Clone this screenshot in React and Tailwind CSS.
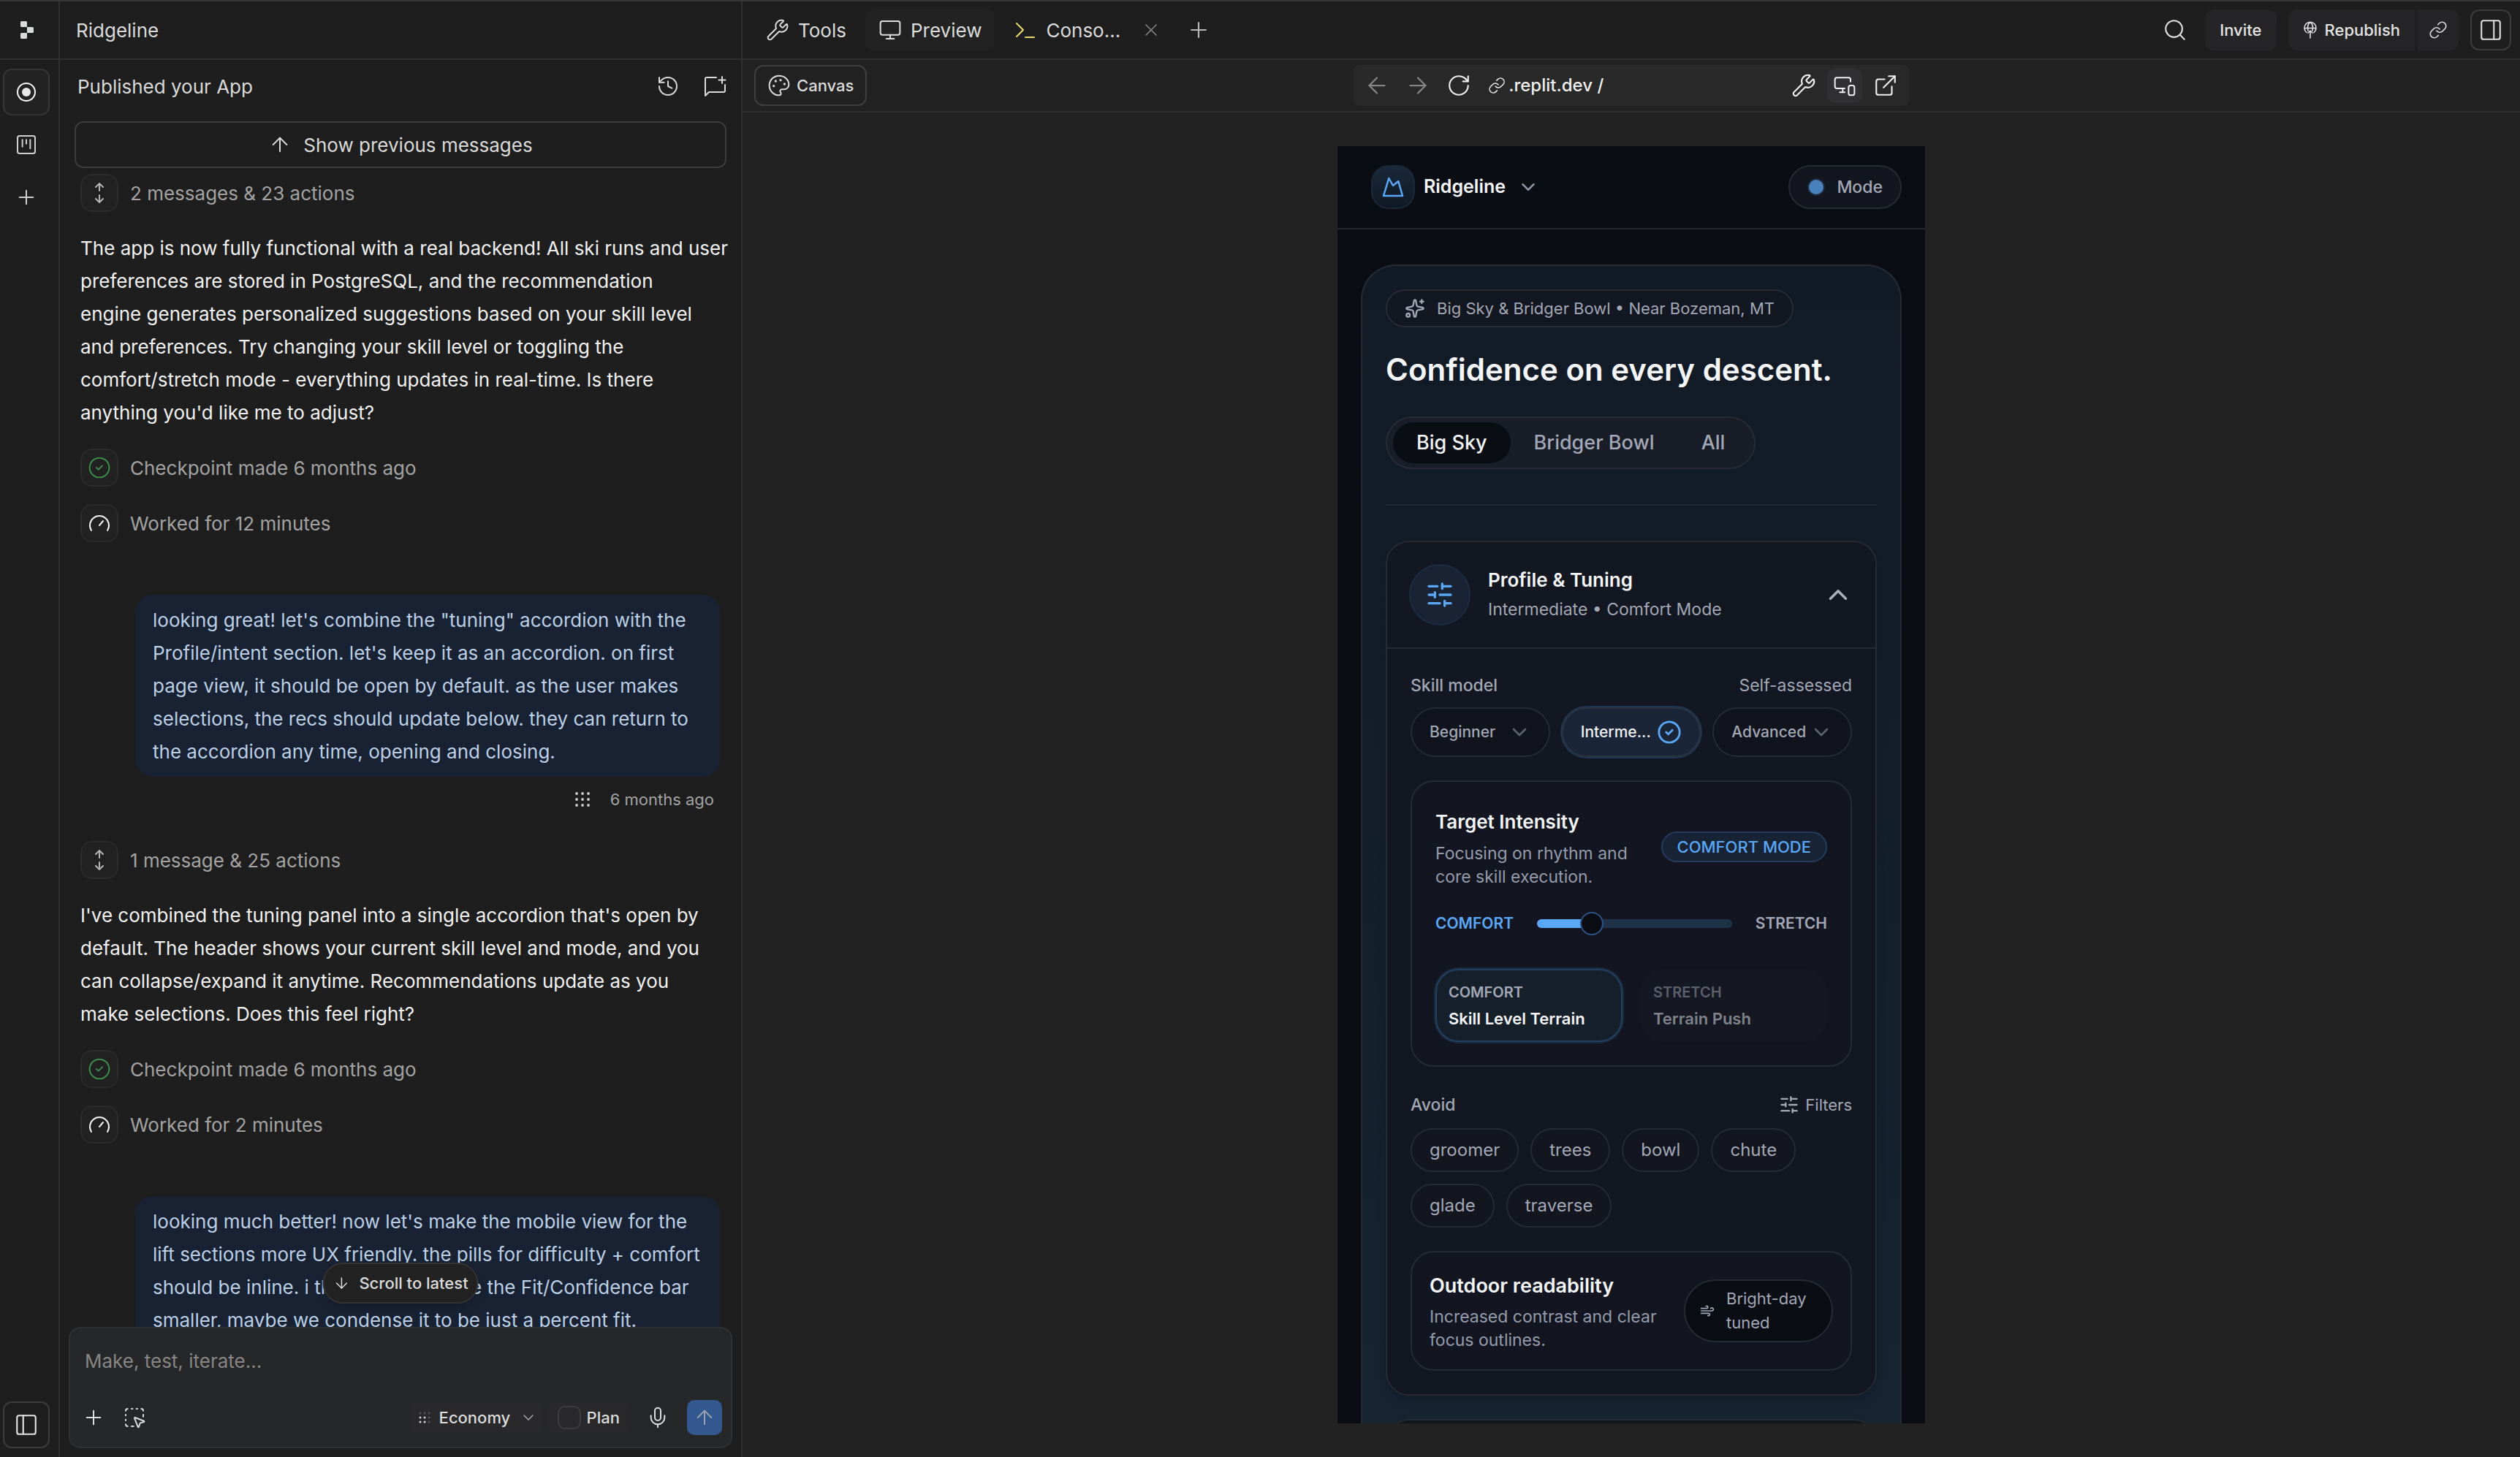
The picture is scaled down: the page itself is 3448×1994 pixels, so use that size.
import React, {useState} from "react";
import {
    ArrowDown,
    ArrowLeft,
    ArrowRight,
    ArrowUp,
    ChevronDown,
    ChevronUp,
    CircleCheck,
    ExternalLink,
    History,
    Link,
    Mic,
    Monitor,
    MonitorSmartphone,
    Palette,
    PanelLeft,
    PanelRight,
    Plus,
    RotateCw,
    Search,
    SlidersHorizontal,
    Sparkles,
    SquareDashedMousePointer,
    SquareKanban,
    Wind,
    Wrench,
    X,
} from "lucide-react";

const firstReply = `The app is now fully functional with a real backend! All ski runs and user
preferences are stored in PostgreSQL, and the recommendation
engine generates personalized suggestions based on your skill level
and preferences. Try changing your skill level or toggling the
comfort/stretch mode - everything updates in real-time. Is there
anything you'd like me to adjust?`;

const firstRequest = `looking great! let's combine the "tuning" accordion with the
Profile/intent section. let's keep it as an accordion. on first
page view, it should be open by default. as the user makes
selections, the recs should update below. they can return to
the accordion any time, opening and closing.`;

const secondReply = `I've combined the tuning panel into a single accordion that's open by
default. The header shows your current skill level and mode, and you
can collapse/expand it anytime. Recommendations update as you
make selections. Does this feel right?`;

const secondRequest = `looking much better! now let's make the mobile view for the
lift sections more UX friendly. the pills for difficulty + comfort
should be inline. i think we can make the Fit/Confidence bar
smaller, maybe we condense it to be just a percent fit.`;

const ReplitLogo = () => (
    <svg width="18" height="24" viewBox="0 0 18 24" fill="#d9dadb">
        <path d="M1.5 0h6A1.5 1.5 0 0 1 9 1.5V8H1.5A1.5 1.5 0 0 1 0 6.500V1.500A1.500 1.500 0 0 1 1.500 0z" />
        <path d="M9 8h7.500A1.500 1.500 0 0 1 18 9.500v5a1.500 1.500 0 0 1-1.500 1.500H9z" />
        <path d="M1.500 16H9v6.500A1.500 1.500 0 0 1 7.500 24h-6A1.500 1.500 0 0 1 0 22.500v-5A1.500 1.500 0 0 1 1.500 16z" />
    </svg>
);

const AgentIcon = () => (
    <svg width="28" height="28" viewBox="0 0 28 28" fill="none">
        <circle cx="14" cy="14" r="12" stroke="#f5f5f5" strokeWidth="2" />
        <circle cx="14" cy="14" r="6" fill="#e8e8e8" />
    </svg>
);

const NewChatIcon = () => (
    <svg width="32" height="32" viewBox="0 0 32 32" fill="none" stroke="currentColor" strokeWidth="2" strokeLinecap="round" strokeLinejoin="round">
        <path d="M18 4H5a2 2 0 0 0-2 2v23l5-5h20a2 2 0 0 0 2-2V14" />
        <path d="M26 3v9M21.500 7.500h9" />
    </svg>
);

const ExpandIcon = () => (
    <svg width="16" height="32" viewBox="0 0 16 32" fill="none" stroke="#b4b4b4" strokeWidth="2" strokeLinecap="round" strokeLinejoin="round">
        <path d="M8 13V3M3 8l5-5 5 5M8 19v10M3 24l5 5 5-5" />
    </svg>
);

const GaugeIcon = () => (
    <svg width="32" height="32" viewBox="0 0 32 32" fill="none" stroke="#f0f0f0" strokeWidth="2" strokeLinecap="round">
        <path d="M5 26a13 13 0 1 1 22 0M16 19l5-6" />
    </svg>
);

const GridDots = () => (
    <svg width="20" height="20" viewBox="0 0 20 20" fill="#c8c8c8">
        {[2, 10, 18].map((y) => [2, 10, 18].map((x) => <circle key={`${x}-${y}`} cx={x} cy={y} r="2" />))}
    </svg>
);

const EconomyDots = () => (
    <svg width="16" height="16" viewBox="0 0 16 16" fill="#d4d4d4">
        {[2, 8, 14].map((y) => [2, 8, 14].map((x) => (
            <circle key={`${x}-${y}`} cx={x} cy={y} r="1.500" opacity={y === 2 || x === 14 ? 0.250 : 1} />
        )))}
    </svg>
);

const ConsoleIcon = () => (
    <svg width="32" height="32" viewBox="0 0 32 32" fill="none" stroke="#e9d971" strokeWidth="2" strokeLinecap="round" strokeLinejoin="round">
        <path d="M4 7l9 9-9 9M16 26h12" />
    </svg>
);

const PublishIcon = () => (
    <svg width="20" height="24" viewBox="0 0 20 24" fill="none" stroke="currentColor" strokeWidth="1.600" strokeLinecap="round" strokeLinejoin="round">
        <path d="M5 15.500a8 8 0 1 1 10 0M2 9.500h16M7 13c-1.500-5 0-10 3-11.500 3 1.500 4.500 6.500 3 11.500M10 23V13M7 16l3-3 3 3" />
    </svg>
);

const RidgeIcon = () => (
    <svg width="32" height="32" viewBox="0 0 32 32" fill="none" stroke="#5aa8f5" strokeWidth="2.500" strokeLinejoin="round">
        <path d="M3 28L10.300 4l5.700 10 7.300-6L29 28z" />
    </svg>
);

const StatusRow = ({icon, children}) => (
    <div className="flex items-center gap-4">
        <span className="flex size-[52px] items-center justify-center rounded-2xl border-2 border-[#2b2b2b] bg-[#212121]">{icon}</span>
        <span className="text-[#a3a3a3]">{children}</span>
    </div>
);

const Bubble = ({children}) => (
    <p className="ml-auto w-[800px] whitespace-pre-line rounded-3xl bg-[#182233] px-6 py-3 leading-[45px] text-[#bccfe4]">{children}</p>
);

const Reply = ({children}) => (
    <p className="my-[27px] whitespace-pre leading-[45px] text-[#f2f2f2]">{children}</p>
);

const Rail = () => (
    <nav className="flex w-[82px] shrink-0 flex-col border-r-2 border-[#303030]">
        <div className="flex h-20 items-center border-b-2 border-[#303030] pl-7">
            <ReplitLogo />
        </div>
        <div className="flex flex-1 flex-col gap-2 py-3 pl-1">
            <button aria-label="Agent" className="flex size-16 items-center justify-center rounded-xl border-2 border-[#353535] bg-[#222222]">
                <AgentIcon />
            </button>
            <button aria-label="Board" className="flex size-16 items-center justify-center text-[#d0d0d0]">
                <SquareKanban size={32} strokeWidth={1.5} />
            </button>
            <button aria-label="New" className="flex size-16 items-center justify-center text-[#d0d0d0]">
                <Plus size={32} strokeWidth={1.5} />
            </button>
            <button aria-label="Toggle sidebar" className="mt-auto flex size-16 items-center justify-center rounded-xl border-2 border-[#3b3b3b] text-[#e4e4e4]">
                <PanelLeft size={34} strokeWidth={1.5} />
            </button>
        </div>
    </nav>
);

const Composer = () => (
    <form className="mx-3 mb-3 rounded-2xl border-2 border-[#303132] bg-[#262728]" onSubmit={(e) => e.preventDefault()}>
        <textarea
            aria-label="Message"
            rows={1}
            placeholder="Make, test, iterate..."
            className="block h-[98px] w-full resize-none bg-transparent px-5 pt-[22px] leading-[45px] text-[#e4e4e4] placeholder:text-[#868686] focus:outline-none"
        />
        <div className="flex items-center pb-4 pl-4 pr-3 text-[22px] font-medium text-[#dcdcdc]">
            <button type="button" aria-label="Attach"><Plus size={32} strokeWidth={1.5} /></button>
            <button type="button" aria-label="Select element" className="ml-6"><SquareDashedMousePointer size={32} strokeWidth={1.5} /></button>
            <div className="ml-auto flex h-12 items-center gap-3 rounded-xl bg-[#29292b] pl-3 pr-2">
                <EconomyDots />
                <select aria-label="Mode" className="appearance-none bg-transparent">
                    <option>Economy</option>
                </select>
                <ChevronDown size={24} strokeWidth={1.5} className="text-[#a8a8a8]" />
            </div>
            <label className="ml-2 flex h-12 items-center gap-2 rounded-xl bg-[#29292b] pl-3 pr-3">
                <input type="checkbox" className="size-8 appearance-none rounded-[10px] border-2 border-[#3d3d3f]" />
                Plan
            </label>
            <button type="button" aria-label="Dictate" className="mx-6"><Mic size={32} strokeWidth={1.5} /></button>
            <button aria-label="Send" className="flex size-12 items-center justify-center rounded-[10px] bg-[#32588f] text-[#9aa3ae]">
                <ArrowUp size={32} strokeWidth={1.5} />
            </button>
        </div>
    </form>
);

const ChatPanel = () => (
    <section className="flex w-[934px] shrink-0 flex-col border-r-2 border-[#303030] text-[26px]">
        <header className="flex h-20 shrink-0 items-center border-b-2 border-[#303030] pl-[22px] text-[#dadada]">
            <h1>Ridgeline</h1>
        </header>
        <div className="flex h-[72px] shrink-0 items-center gap-8 pl-6 pr-5 text-[#dadada]">
            <h2 className="mr-auto">Published your App</h2>
            <button aria-label="History"><History size={32} strokeWidth={1.5} /></button>
            <button aria-label="New chat"><NewChatIcon /></button>
        </div>
        <div className="relative flex min-h-0 flex-1 flex-col">
            <div className="min-h-0 flex-1 overflow-hidden px-5 pt-3">
                <button className="flex h-16 w-full items-center justify-center gap-4 rounded-xl border-2 border-[#3b3b3b] text-[#dadada]">
                    <ArrowUp size={32} strokeWidth={1.5} />
                    Show previous messages
                </button>
                <div className="pl-2 pr-[9px] pt-2">
                    <StatusRow icon={<ExpandIcon />}>2 messages &amp; 23 actions</StatusRow>
                    <Reply>{firstReply}</Reply>
                    <StatusRow icon={<CircleCheck size={32} strokeWidth={1.5} className="text-[#3f8a4d]" />}>Checkpoint made 6 months ago</StatusRow>
                    <div className="mb-[72px] mt-6">
                        <StatusRow icon={<GaugeIcon />}>Worked for 12 minutes</StatusRow>
                    </div>
                    <Bubble>{firstRequest}</Bubble>
                    <div className="mb-[26px] flex h-[62px] items-center justify-end gap-7 pr-2 text-[22px] text-[#a3a3a3]">
                        <button aria-label="Message options"><GridDots /></button>
                        6 months ago
                    </div>
                    <StatusRow icon={<ExpandIcon />}>1 message &amp; 25 actions</StatusRow>
                    <Reply>{secondReply}</Reply>
                    <StatusRow icon={<CircleCheck size={32} strokeWidth={1.5} className="text-[#3f8a4d]" />}>Checkpoint made 6 months ago</StatusRow>
                    <div className="mb-[72px] mt-6">
                        <StatusRow icon={<GaugeIcon />}>Worked for 2 minutes</StatusRow>
                    </div>
                    <Bubble>{secondRequest}</Bubble>
                </div>
            </div>
            <button className="absolute bottom-8 left-1/2 flex h-14 -translate-x-1/2 items-center gap-3 whitespace-nowrap rounded-full border-2 border-[#333333] bg-[#222222] px-3 text-[22px] font-medium text-[#dcdcdc] shadow-lg">
                <ArrowDown size={24} strokeWidth={1.5} />
                Scroll to latest
            </button>
        </div>
        <Composer />
    </section>
);

const TabBar = () => (
    <header className="flex h-20 shrink-0 items-center border-b-2 border-[#303030] pl-[14px] pr-3 text-[26px] text-[#dcdcdc]">
        <div className="flex items-center gap-2">
            <button className="flex h-14 items-center gap-3 px-[18px]"><Wrench size={32} strokeWidth={1.5} />Tools</button>
            <button className="flex h-14 items-center gap-3 rounded-xl bg-[#222222] px-[18px]"><Monitor size={32} strokeWidth={1.5} />Preview</button>
            <button className="flex h-14 items-center gap-3 pl-[18px]"><ConsoleIcon />Conso...</button>
        </div>
        <button aria-label="Close tab" className="ml-7 text-[#808080]"><X size={28} strokeWidth={1.5} /></button>
        <button aria-label="New tab" className="ml-[34px] text-[#b8b8b8]"><Plus size={34} strokeWidth={1.5} /></button>
        <div className="ml-auto flex items-center text-[22px] font-medium">
            <button aria-label="Search" className="mr-6"><Search size={34} strokeWidth={1.5} /></button>
            <button className="h-14 rounded-xl bg-[#252527] px-5 text-[#e4e4e4]">Invite</button>
            <button className="ml-4 flex h-14 items-center gap-[10px] rounded-l-xl bg-[#252527] px-5 text-[#e4e4e4]"><PublishIcon />Republish</button>
            <button aria-label="Copy link" className="ml-1 flex size-14 items-center justify-center rounded-r-xl bg-[#252527]"><Link size={26} strokeWidth={1.5} /></button>
            <button aria-label="Toggle panel" className="ml-4 flex size-14 items-center justify-center rounded-xl border-2 border-[#3b3b3b]"><PanelRight size={34} strokeWidth={1.5} /></button>
        </div>
    </header>
);

const AddressBar = () => (
    <div className="grid h-[72px] shrink-0 grid-cols-[1fr_760px_1fr] items-center border-b-2 border-[#303030] px-4">
        <button className="flex h-14 w-fit items-center gap-2 rounded-xl border-2 border-[#3f3f3f] pl-4 pr-4 text-[22px] font-medium text-[#dcdcdc]">
            <Palette size={32} strokeWidth={1.5} />
            Canvas
        </button>
        <div className="flex h-14 items-center gap-2 rounded-lg bg-[#292929] px-2 text-[#efefef]">
            <button aria-label="Back" className="flex size-12 items-center justify-center text-[#858585]"><ArrowLeft size={36} strokeWidth={1.5} /></button>
            <button aria-label="Forward" className="flex size-12 items-center justify-center text-[#858585]"><ArrowRight size={36} strokeWidth={1.5} /></button>
            <button aria-label="Reload" className="flex size-12 items-center justify-center"><RotateCw size={34} strokeWidth={1.5} /></button>
            <label className="flex flex-1 items-center gap-1 pl-2">
                <Link size={26} strokeWidth={1.5} />
                <input aria-label="Address" defaultValue=".replit.dev /" className="w-full bg-transparent text-[24px] font-medium focus:outline-none" />
            </label>
            <button aria-label="Developer tools" className="flex size-12 items-center justify-center"><Wrench size={34} strokeWidth={1.5} /></button>
            <button aria-label="Device size" className="flex size-12 items-center justify-center rounded-xl bg-[#303032]"><MonitorSmartphone size={32} strokeWidth={1.5} /></button>
            <button aria-label="Open in new tab" className="flex size-12 items-center justify-center"><ExternalLink size={34} strokeWidth={1.5} /></button>
        </div>
    </div>
);

const SkillPill = ({label, active}) => (
    active ? (
        <button className="flex h-[68px] min-w-0 items-center justify-between rounded-full border-2 border-[#2c333e] bg-[#1a2637] px-6 text-[21px] font-medium text-[#f1f4f8] ring-2 ring-[#20354f]">
            <span className="whitespace-nowrap">{label}</span>
            <CircleCheck size={34} strokeWidth={2} className="shrink-0 text-[#5aa8f5]" />
        </button>
    ) : (
        <button className="flex h-[68px] min-w-0 items-center justify-between rounded-full border-2 border-[#262a33] bg-[#11141d] px-6 text-[21px] font-medium text-[#a2a8b5]">
            <span>{label}</span>
            <ChevronDown size={32} strokeWidth={2} className="shrink-0 text-[#5b606b]" />
        </button>
    )
);

const TargetIntensity = () => {
    const [intensity, setIntensity] = useState(25);
    return (
        <div className="mt-8 rounded-[32px] border-2 border-[#262a33] bg-[#131620] p-8">
            <div className="flex items-center justify-between">
                <div>
                    <h3 className="text-[26px] font-semibold leading-[46px] text-[#f4f6f9]">Target Intensity</h3>
                    <p className="mt-1 text-[23px] leading-8 text-[#949cab]">Focusing on rhythm and<br />core skill execution.</p>
                </div>
                <span className="rounded-full border-2 border-[#243c5c] bg-[#182436] px-5 text-[22px] font-medium leading-[38px] text-[#5aa8f5]">COMFORT MODE</span>
            </div>
            <div className="mt-8 flex h-8 items-center gap-8 text-[21px] font-semibold">
                <label htmlFor="intensity" className="text-[#5aa8f5]">COMFORT</label>
                <input
                    id="intensity"
                    type="range"
                    value={intensity}
                    onChange={(e) => setIntensity(Number(e.target.value))}
                    className="h-3 min-w-0 flex-1 appearance-none rounded-full bg-[linear-gradient(to_right,#5aa8f5_28%,#20324a_28%)] [&::-webkit-slider-thumb]:size-8 [&::-webkit-slider-thumb]:appearance-none [&::-webkit-slider-thumb]:rounded-full [&::-webkit-slider-thumb]:border-2 [&::-webkit-slider-thumb]:border-[#2c5482] [&::-webkit-slider-thumb]:bg-[#0b0d15]"
                />
                <span className="text-[#a2a8b5]">STRETCH</span>
            </div>
            <div className="mt-[46px] grid grid-cols-2 gap-6">
                <button className="flex h-[100px] flex-col justify-center rounded-[32px] border-2 border-[#24405f] bg-[#16202b] px-4 text-left ring-2 ring-[#1a2a3f]">
                    <span className="text-[20px] font-semibold leading-9 text-[#a2a8b5]">COMFORT</span>
                    <span className="text-[22px] font-semibold leading-9 text-[#f4f6f9]">Skill Level Terrain</span>
                </button>
                <button className="flex h-[100px] flex-col justify-center rounded-[32px] bg-[#151822] px-[18px] text-left">
                    <span className="text-[20px] font-semibold leading-9 text-[#5a5f6a]">STRETCH</span>
                    <span className="text-[22px] font-semibold leading-9 text-[#7f828a]">Terrain Push</span>
                </button>
            </div>
        </div>
    );
};

const ProfileCard = () => (
    <div className="overflow-hidden rounded-[32px] border-2 border-[#262a33] bg-[#131721] shadow-lg">
        <button className="flex w-full items-center border-b-2 border-[#262a33] p-[30px] text-left">
            <span className="flex size-[84px] items-center justify-center rounded-full border-2 border-[#1c2c41] bg-[#192334] text-[#5aa8f5]">
                <SlidersHorizontal size={40} strokeWidth={2} />
            </span>
            <span className="ml-6 flex-1">
                <span className="block text-[26px] font-semibold leading-10 text-[#f4f6f9]">Profile &amp; Tuning</span>
                <span className="block text-[23px] leading-10 text-[#a2a8b5]">Intermediate • Comfort Mode</span>
            </span>
            <ChevronUp size={42} strokeWidth={2} className="text-[#a9b0bb]" />
        </button>
        <div className="p-8 pt-[30px]">
            <div className="flex justify-between text-[23px] leading-10 text-[#a2a8b5]">
                <span className="font-medium">Skill model</span>
                <span>Self-assessed</span>
            </div>
            <div className="mt-[10px] grid grid-cols-3 gap-4">
                <SkillPill label="Beginner" />
                <SkillPill label="Interme..." active />
                <SkillPill label="Advanced" />
            </div>
            <TargetIntensity />
            <div className="mt-8 flex items-center justify-between text-[23px] leading-10 text-[#a2a8b5]">
                <span className="font-medium">Avoid</span>
                <button className="flex items-center gap-2 text-[22px]"><SlidersHorizontal size={28} strokeWidth={2} />Filters</button>
            </div>
            <div className="mt-3 flex flex-wrap gap-4">
                {["groomer", "trees", "bowl", "chute", "glade", "traverse"].map((terrain) => (
                    <button key={terrain} className="h-[60px] rounded-full border-2 border-[#262a33] bg-[#13151f] px-6 text-[24px] text-[#a2a8b5]">{terrain}</button>
                ))}
            </div>
            <div className="mt-8 flex items-center justify-between rounded-[32px] border-2 border-[#262a33] bg-[#131620] p-6">
                <div>
                    <h3 className="text-[27px] font-semibold leading-[44px] text-[#f4f6f9]">Outdoor readability</h3>
                    <p className="mt-1 text-[23px] leading-8 text-[#949cab]">Increased contrast and clear<br />focus outlines.</p>
                </div>
                <span className="flex w-[204px] items-center gap-4 rounded-full border-2 border-[#262a33] bg-[#0b0d15] py-2 pl-5 text-[22px] leading-[33px] text-[#a2a8b5]">
                    <Wind size={20} strokeWidth={2} />
                    <span>Bright-day<br />tuned</span>
                </span>
            </div>
        </div>
    </div>
);

const PhonePreview = () => (
    <div className="flex min-h-0 w-[804px] flex-col overflow-hidden bg-[#0b0d15]">
        <header className="flex h-[114px] shrink-0 items-center justify-between border-b-2 border-[#262931] pl-[46px] pr-8">
            <button className="flex items-center text-[25px] font-semibold text-[#f4f6f9]">
                <span className="mr-3 flex size-[60px] items-center justify-center rounded-3xl border-2 border-[#1a2838] bg-linear-to-b from-[#1a293b] to-[#101823]">
                    <RidgeIcon />
                </span>
                Ridgeline
                <ChevronDown size={30} strokeWidth={2} className="ml-4 text-[#8d94a1]" />
            </button>
            <button className="flex h-[60px] items-center gap-4 rounded-full border-2 border-[#262a33] bg-[#13161f] px-6 text-[23px] font-medium text-[#a2a8b5]">
                <span className="size-6 rounded-full border-2 border-[#1c2b40] bg-[#4881bb]"></span>
                Mode
            </button>
        </header>
        <div className="px-8 pt-12">
            <div className="rounded-t-[48px] border-2 border-b-0 border-[#262b34] bg-linear-to-b from-[#111a25] to-[#162532] p-8">
                <div className="flex h-[52px] w-fit items-center gap-4 rounded-full border-2 border-[#262b34] bg-[#131721] px-6 text-[22px] text-[#a2a8b5]">
                    <Sparkles size={28} strokeWidth={2} />
                    Big Sky &amp; Bridger Bowl • Near Bozeman, MT
                </div>
                <h2 className="mt-7 whitespace-nowrap text-[42px] font-semibold leading-[60px] text-[#f4f6f9]">Confidence on every descent.</h2>
                <div className="mt-[34px] flex w-fit rounded-full border-2 border-[#262b34] bg-[#181d28] px-2 py-[6px] text-[27px] font-medium text-[#a2a8b5]">
                    <button className="h-14 rounded-full bg-[#0b0d15] px-8 text-[#f4f6f9]">Big Sky</button>
                    <button className="h-14 px-8">Bridger Bowl</button>
                    <button className="h-14 px-8">All</button>
                </div>
                <hr className="my-12 border-t-2 border-[#1f2932]" />
                <ProfileCard />
                <div className="mt-8 h-40 rounded-[32px] border-2 border-[#262a33] bg-[#11151e]"></div>
            </div>
        </div>
    </div>
);

const App = () => {
    return (
        <div className="flex h-screen w-full overflow-hidden border-t-2 border-[#383838] bg-[#1e1e1e] font-['Inter',sans-serif]">
            <Rail />
            <ChatPanel />
            <main className="flex min-w-0 flex-1 flex-col">
                <TabBar />
                <div className="flex min-h-0 flex-1 flex-col bg-[#222222]">
                    <AddressBar />
                    <div className="flex min-h-0 flex-1 justify-center py-[46px]">
                        <PhonePreview />
                    </div>
                </div>
            </main>
        </div>
    );
};

export default App;
